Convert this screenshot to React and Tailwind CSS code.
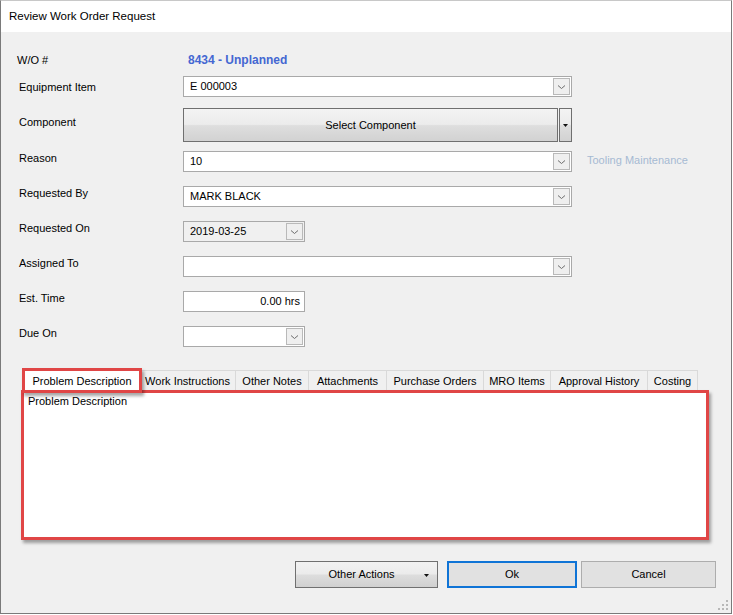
import React from 'react'

const font = { fontFamily: '"Liberation Sans", Arial, sans-serif' }

function Chevron() {
  return (
    <svg width="9" height="6" viewBox="0 0 9 6" fill="none">
      <path d="M1 1.5 L4.5 4.5 L8 1.5" stroke="#6d6d6d" strokeWidth="1" />
    </svg>
  )
}

function DropButton() {
  return (
    <div className="flex h-[17px] w-[17px] shrink-0 items-center justify-center border border-[#b9b9b9] bg-[#efefef]">
      <Chevron />
    </div>
  )
}

function Combo({ value, width = 'w-[389px]', gray = false }) {
  return (
    <div
      className={`flex h-[21px] ${width} items-center justify-between border border-[#a9a9a9] ${
        gray ? 'bg-[#f0f0f0]' : 'bg-white'
      } pl-[6px] pr-[1px]`}
    >
      <span className="text-[11px] text-black">{value}</span>
      <DropButton />
    </div>
  )
}

function Row({ label, children, labelTop = '-mt-[1px]' }) {
  return (
    <div className="mt-[14px] flex items-start">
      <div className={`w-[166px] pl-[2px] text-[11px] leading-[16px] text-black ${labelTop}`}>{label}</div>
      {children}
    </div>
  )
}

const tabs = [
  ['Work Instructions', 'w-[96px]'],
  ['Other Notes', 'w-[73px]'],
  ['Attachments', 'w-[78px]'],
  ['Purchase Orders', 'w-[97px]'],
  ['MRO Items', 'w-[67px]'],
  ['Approval History', 'w-[97px]'],
  ['Costing', 'w-[50px]'],
]

function Grip() {
  const dots = [
    [8, 0],
    [4, 4],
    [8, 4],
    [0, 8],
    [4, 8],
    [8, 8],
  ]
  return (
    <svg className="absolute bottom-[2px] right-[2px]" width="11" height="11" viewBox="0 0 11 11">
      {dots.map(([x, y]) => (
        <rect key={`${x}-${y}`} x={x} y={y} width="2" height="2" fill="#b8b8b8" />
      ))}
    </svg>
  )
}

export default function App() {
  return (
    <div className="h-[615px] w-[733px] bg-white" style={font}>
      <div className="flex h-[614px] w-[732px] flex-col border border-[#7a7a7a] border-t-[#c8c8c8] bg-[#f0f0f0]">
        <div className="flex h-[31px] items-center bg-white pl-[8px] text-[11.5px] text-black">
          Review Work Order Request
        </div>

        <div className="relative flex-1 pl-[16px]">
          {/* W/O */}
          <div className="mt-[19px] flex h-[18px] items-center">
            <div className="w-[171px] text-[11px] text-black">W/O #</div>
            <div className="text-[12px] font-bold text-[#4467d2]">8434 - Unplanned</div>
          </div>

          <div className="mt-[7px] flex items-center">
            <div className="mt-[1px] w-[166px] pl-[2px] text-[11px] text-black">Equipment Item</div>
            <Combo value="E 000003" />
          </div>

          <div className="mt-[11px] flex items-start">
            <div className="mt-[6px] w-[166px] pl-[2px] text-[11px] leading-[16px] text-black">Component</div>
            <div className="flex h-[34px] w-[389px] gap-[1px]">
              <button className="flex flex-1 items-center justify-center border border-[#6f6f6f] bg-[linear-gradient(to_bottom,#f3f3f3_0%,#ececec_48%,#dedede_52%,#d2d2d2_100%)] text-[11px] text-black">
                Select Component
              </button>
              <div className="flex w-[13px] items-center justify-center border border-[#6f6f6f] bg-[linear-gradient(to_bottom,#f3f3f3_0%,#ececec_48%,#dedede_52%,#d2d2d2_100%)]">
                <svg width="5" height="3" viewBox="0 0 5 3">
                  <path d="M0 0 H5 L2.5 3 Z" fill="#111" />
                </svg>
              </div>
            </div>
          </div>

          <div className="mt-[9px] flex items-start">
            <div className="-mt-[1px] w-[166px] pl-[2px] text-[11px] leading-[16px] text-black">Reason</div>
            <Combo value="10" />
            <div className="ml-[15px] mt-[1px] text-[11px] text-[#a6bad3]">Tooling Maintenance</div>
          </div>

          <Row label="Requested By">
            <Combo value="MARK BLACK" />
          </Row>
          <Row label="Requested On">
            <Combo value="2019-03-25" width="w-[122px]" gray />
          </Row>
          <Row label="Assigned To">
            <Combo value="" />
          </Row>
          <Row label="Est. Time">
            <div className="flex h-[21px] w-[122px] items-center justify-end border border-[#a9a9a9] bg-white pr-[4px] text-[11px] text-black">
              0.00 hrs
            </div>
          </Row>
          <Row label="Due On">
            <Combo value="" width="w-[122px]" />
          </Row>

          {/* tabs */}
          <div className="ml-[5px] mt-[21px] w-[685px]">
            <div className="flex h-[22px] items-end pl-[2px]">
              <div className="flex h-[22px] w-[116px] items-start justify-center border border-b-0 border-[#d9d9d9] bg-white pt-[4px] text-[11px] text-black">
                Problem Description
              </div>
              {tabs.map(([t, w]) => (
                <div
                  key={t}
                  className={`flex h-[20px] ${w} items-center justify-center border-r border-t border-[#d9d9d9] bg-[#f0f0f0] pt-[2px] text-[11px] text-black`}
                >
                  {t}
                </div>
              ))}
            </div>
            <div className="h-[148px] border border-[#d9d9d9] bg-white pl-[5px] pt-[2px] text-[11px] text-black">
              Problem Description
            </div>
          </div>

          {/* buttons */}
          <div className="mt-[23px] flex justify-end pr-[15px]">
            <button className="relative flex h-[27px] w-[143px] items-center justify-center border border-[#707070] bg-[linear-gradient(to_bottom,#f2f2f2_0%,#ebebeb_48%,#dddddd_52%,#d0d0d0_100%)] pr-[10px] text-[11px] text-black">
              Other Actions
              <svg className="absolute right-[8px] top-[12px]" width="5" height="3" viewBox="0 0 5 3">
                <path d="M0 0 H5 L2.5 3 Z" fill="#111" />
              </svg>
            </button>
            <button className="ml-[9px] flex h-[27px] w-[130px] items-center justify-center border-2 border-[#0f74d6] bg-[#e1e1e1] text-[11px] text-black">
              Ok
            </button>
            <button className="ml-[4px] flex h-[27px] w-[135px] items-center justify-center border border-[#adadad] bg-[#e1e1e1] text-[11px] text-black">
              Cancel
            </button>
          </div>

          {/* annotation boxes */}
          <div className="pointer-events-none absolute left-[20px] top-[358px] h-[150px] w-[688px] border-[3px] border-[#e04646] shadow-[2px_3px_3px_rgba(0,0,0,0.35)]" />
          <div className="pointer-events-none absolute left-[21px] top-[336px] h-[25px] w-[120px] border-[3px] border-[#e04646] shadow-[2px_3px_3px_rgba(0,0,0,0.35)]" />

          <Grip />
        </div>
      </div>
    </div>
  )
}
